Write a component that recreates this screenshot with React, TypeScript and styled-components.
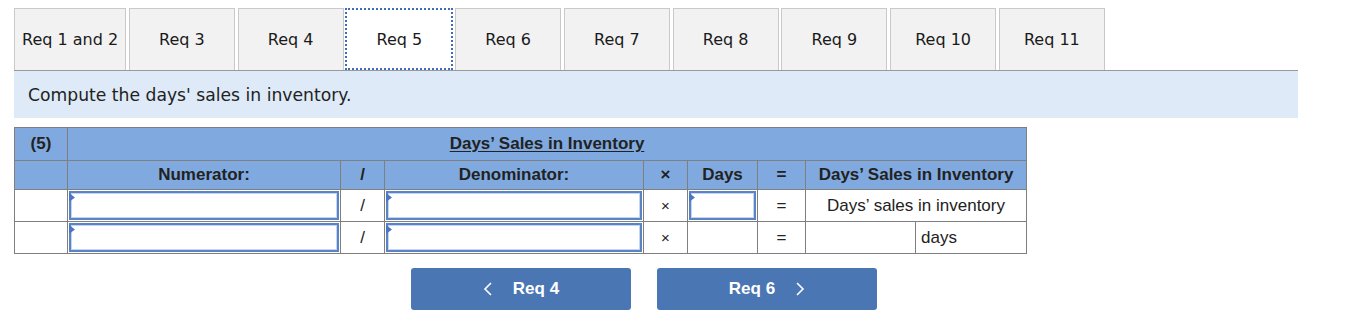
import React from "react";
import styled, { createGlobalStyle } from "styled-components";

const GlobalStyle = createGlobalStyle`
  body {
    margin: 0;
    background: #ffffff;
    font-family: "DejaVu Sans", Verdana, sans-serif;
    color: #222;
  }
`;

const tabs = [
  "Req 1 and 2",
  "Req 3",
  "Req 4",
  "Req 5",
  "Req 6",
  "Req 7",
  "Req 8",
  "Req 9",
  "Req 10",
  "Req 11",
];

const colWidths = [53, 273, 44, 259, 44, 70, 48, 110, 111];

function Marker() {
  return (
    <Flag width="6" height="9" viewBox="0 0 6 9">
      <path d="M0 0 L6 4.5 L0 9 Z" fill="#4a78c0" />
    </Flag>
  );
}

function Entry() {
  return (
    <InputBox>
      <Marker />
    </InputBox>
  );
}

export default function App() {
  return (
    <Page>
      <GlobalStyle />
      <TabBar>
        {tabs.map((t) => (
          <Tab key={t} $active={t === "Req 5"}>
            {t}
          </Tab>
        ))}
      </TabBar>
      <Prompt>Compute the days' sales in inventory.</Prompt>

      <Grid>
        <colgroup>
          {colWidths.map((w, i) => (
            <col key={i} style={{ width: w }} />
          ))}
        </colgroup>
        <tbody>
          <TitleRow>
            <HeadCell>(5)</HeadCell>
            <HeadCell colSpan={8}>
              <Underlined>Days’ Sales in Inventory</Underlined>
            </HeadCell>
          </TitleRow>
          <LabelRow>
            <HeadCell />
            <HeadCell>Numerator:</HeadCell>
            <HeadCell>/</HeadCell>
            <HeadCell>Denominator:</HeadCell>
            <HeadCell>×</HeadCell>
            <HeadCell>Days</HeadCell>
            <HeadCell>=</HeadCell>
            <HeadCell colSpan={2}>Days’ Sales in Inventory</HeadCell>
          </LabelRow>
          <BodyRow>
            <Cell />
            <InputCell>
              <Entry />
            </InputCell>
            <Cell>/</Cell>
            <InputCell>
              <Entry />
            </InputCell>
            <Cell $small>×</Cell>
            <InputCell>
              <Entry />
            </InputCell>
            <Cell>=</Cell>
            <Cell colSpan={2}>Days’ sales in inventory</Cell>
          </BodyRow>
          <BodyRow>
            <Cell />
            <InputCell>
              <Entry />
            </InputCell>
            <Cell>/</Cell>
            <InputCell>
              <Entry />
            </InputCell>
            <Cell $small>×</Cell>
            <Cell />
            <Cell>=</Cell>
            <Cell />
            <Cell $left>days</Cell>
          </BodyRow>
        </tbody>
      </Grid>

      <Nav>
        <NavButton>
          <svg width="10" height="16" viewBox="0 0 10 16">
            <polyline
              points="8,2 2,8 8,14"
              fill="none"
              stroke="#fff"
              strokeWidth="1.6"
            />
          </svg>
          <span>Req 4</span>
        </NavButton>
        <NavButton>
          <span>Req 6</span>
          <svg width="10" height="16" viewBox="0 0 10 16">
            <polyline
              points="2,2 8,8 2,14"
              fill="none"
              stroke="#fff"
              strokeWidth="1.6"
            />
          </svg>
        </NavButton>
      </Nav>
    </Page>
  );
}

const Page = styled.div`
  padding: 8px 14px 0 14px;
  width: 1284px;
`;

const TabBar = styled.div`
  display: flex;
  gap: 2.75px;
  border-bottom: 1px solid #9a9a9a;
  height: 62px;
`;

const Tab = styled.div<{ $active?: boolean }>`
  box-sizing: border-box;
  min-width: 106px;
  height: 62px;
  padding: 0 7px;
  display: flex;
  align-items: center;
  justify-content: center;
  font-size: 16px;
  color: #1a1a1a;
  background: ${(p) => (p.$active ? "#ffffff" : "#f2f2f2")};
  border: ${(p) => (p.$active ? "2px dotted #3f6db5" : "1px solid #c9c9c9")};
  border-bottom: ${(p) => (p.$active ? "2px dotted #3f6db5" : "none")};
  ${(p) => (p.$active ? "min-width: 108px; margin: 0 -1px;" : "")}
`;

const Prompt = styled.div`
  height: 47px;
  background: #deeaf7;
  display: flex;
  align-items: center;
  padding-left: 14px;
  font-size: 17.2px;
  color: #222;
`;

const Grid = styled.table`
  margin-top: 9px;
  border-collapse: collapse;
  table-layout: fixed;
  width: 1012px;
  font-family: "Liberation Sans", Arial, sans-serif;
  font-size: 17px;
  color: #222;

  td {
    border: 1px solid #7f7f7f;
    padding: 0;
    text-align: center;
  }
`;

const TitleRow = styled.tr`
  height: 33px;
  background: #80aadf;
`;

const LabelRow = styled.tr`
  height: 29px;
  background: #80aadf;
`;

const BodyRow = styled.tr`
  height: 32px;
  background: #ffffff;
`;

const HeadCell = styled.td`
  font-weight: 700;
`;

const Underlined = styled.span`
  text-decoration: underline;
  text-underline-offset: 2px;
`;

const Cell = styled.td<{ $left?: boolean; $small?: boolean }>`
  font-size: ${(p) => (p.$small ? "15px" : "17px")};
  && {
    text-align: ${(p) => (p.$left ? "left" : "center")};
    padding-left: ${(p) => (p.$left ? "5px" : "0")};
  }
`;

const InputCell = styled.td`
  && {
    padding: 1px;
  }
`;

const InputBox = styled.div`
  position: relative;
  box-sizing: border-box;
  height: 29px;
  background: #fff;
  border: 2px solid #5b84c4;
  box-shadow: inset 0 0 0 1px #c3d6f1;
`;

const Flag = styled.svg`
  position: absolute;
  left: -2px;
  top: 0;
`;

const Nav = styled.div`
  display: flex;
  justify-content: center;
  gap: 26px;
  width: 1260px;
  margin-top: 14px;
`;

const NavButton = styled.div`
  width: 220px;
  height: 42px;
  background: #4a76b4;
  border-radius: 3px;
  display: flex;
  align-items: center;
  justify-content: center;
  gap: 20px;
  color: #fff;
  font-family: "Liberation Sans", Arial, sans-serif;
  font-weight: 700;
  font-size: 17px;
`;
